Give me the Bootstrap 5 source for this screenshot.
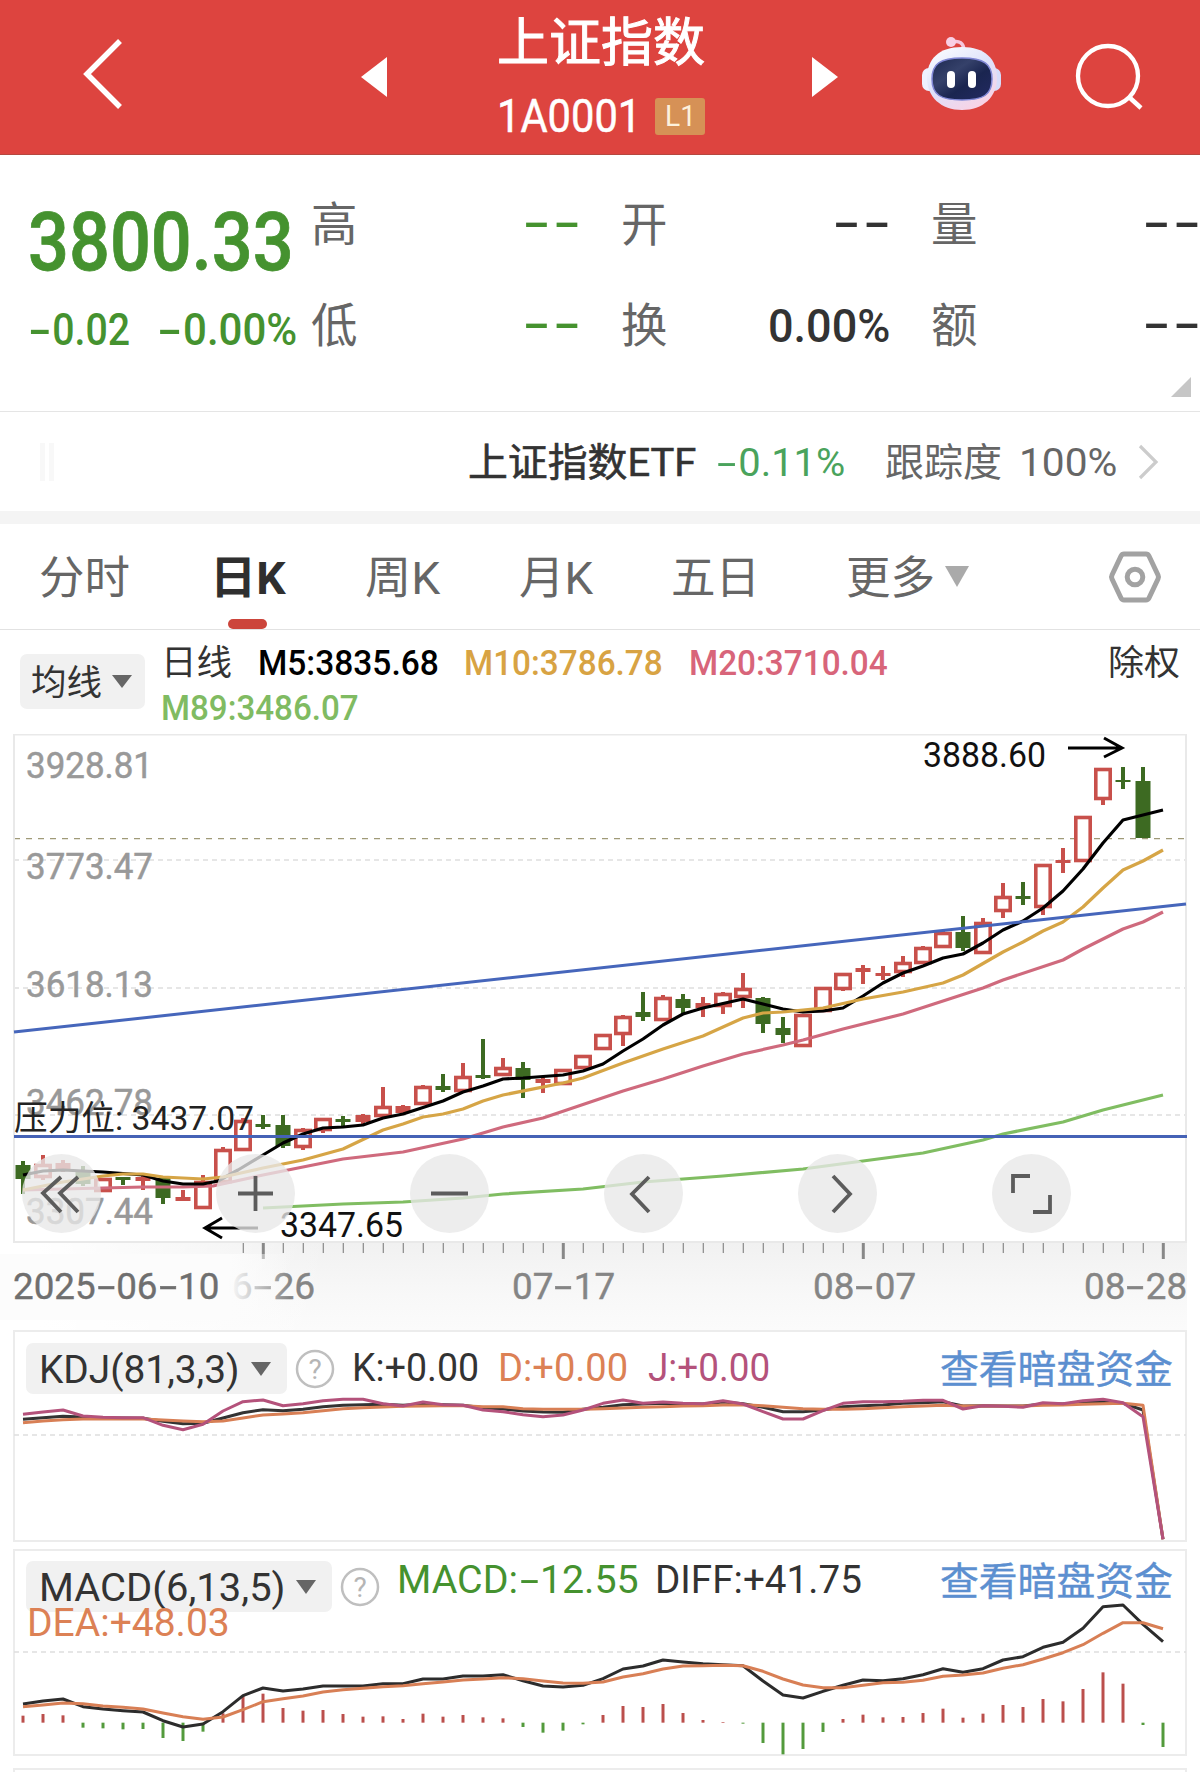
<!DOCTYPE html>
<html lang="zh-CN">
<head>
<meta charset="utf-8">
<meta name="viewport" content="width=device-width, initial-scale=1">
<title>上证指数</title>
<link href="https://cdn.jsdelivr.net/npm/bootstrap@5.3.0/dist/css/bootstrap.min.css" rel="stylesheet">
<style>
body{width:1200px;height:1772px;overflow:hidden;background:#fff;color:#333;font-family:Roboto,"Noto Sans CJK SC",sans-serif;line-height:1}
svg{display:block}
.xgrid{display:grid;align-items:center;white-space:nowrap}
.fit{display:inline-block;transform-origin:0 50%;white-space:nowrap}
.hy{display:inline-block;font-style:normal;transform:scaleX(1.75);margin:0 .14em}
.green{color:#45922f}.amber{color:#d8a343}.rose{color:#d8657a}.lime{color:#80bb62}.orange{color:#dc8155}.plum{color:#b4527b}.muted6{color:#666}
.m{font-weight:500}
.down{padding-top:4px}
.topbar{height:155px;background:#dd443f;color:#fff;border-bottom:1px solid #b5483f;grid-template-columns:83px 278px 132px 319px 109px 151px 1fr}
.backicon{margin-bottom:7px}
.botface{margin-bottom:9px}
.titlebox{height:154px;padding-top:18px;padding-left:4px}
.titletext{font-size:52px;height:52px;-webkit-text-stroke:1px #fff}
.code{font-size:46px;margin-top:23px;height:46px;-webkit-text-stroke:.5px #fff}
.lv{background:#d69156;color:#fdf1dc;width:50px;height:37px;font-size:30px;border-radius:3px;margin-left:14px;-webkit-text-stroke:0}
.quote{height:257px;border-bottom:1px solid #e5e5e5;padding-left:28px;position:relative}
.price{font-size:81px;height:81px;margin-top:47px;-webkit-text-stroke:.8px #45922f}
.chg{font-size:45px;margin-top:24px}
.cell{width:267px;height:101px;font-size:46.5px;color:#666}
.cell b{font-weight:500;color:#333}
.cell b .hy{transform:scaleX(1.75);margin:0 .16em}
.dd{margin-right:-4px}
.cell b.green{color:#45922f}
.cells{padding-top:18px;column-gap:43px;margin-left:17px;width:888px}
.fold{position:absolute;right:9px;bottom:14px}
.etf{height:99px;grid-template-columns:40px 428px 248px 169px 134px 119px 1fr;font-size:39px;padding-top:4px}
.etf svg,.tabs svg,.ghosts{margin-bottom:4px}
.etfname{color:#333;-webkit-text-stroke:.6px #333}
.ghost{width:5px;height:38px;background:#f8f8f8}
.band{height:13px;background:#f4f4f4}
.tabs{height:106px;border-bottom:1px solid #e2e2e2;grid-template-columns:39px 171px 155px 154px 152px 175px 99px 163px 1fr;font-size:45px;color:#666;padding-top:4px}
.tabs .on{color:#2f2f2f;font-weight:700;position:relative}
.tabs .on:after{content:"";position:absolute;left:18px;top:63px;width:39px;height:10px;border-radius:5px;background:#cc453b}
.ma{height:104px;padding-left:20px;font-size:35px}
.pill{background:#f1f1f1;border-radius:7px;color:#333}
.pill.a{width:125px;height:55px;padding:0 13px 0 11px;margin-top:24px}
.malines{margin-left:16px;width:1040px;padding-top:13px}
.maline1{grid-template-columns:97px 206px 225px 419px 1fr;height:40px}
.maline2{height:50px;padding-top:1px}
.plot{height:509px}
.tools .ball{position:absolute;top:420px;width:79px;height:79px;border-radius:50%;background:rgba(232,232,232,.78)}
.axis{height:87px;background:linear-gradient(#f1f1f1,#f8f8f8 60%,#fbfbfb);width:1187px;position:relative}
.axis:before{content:"";position:absolute;inset:0;background:linear-gradient(90deg,#fff 40px,rgba(255,255,255,0) 330px)}
.dates{position:relative;font-size:37.5px;color:#858585;-webkit-text-stroke:.4px currentColor;grid-template-columns:211px 301px 301px 271px 1fr;height:86px;margin-top:-86px}
.firstdate{position:absolute;left:0;top:10px;width:290px;height:66px;padding:14px 0 0 13px;background:linear-gradient(90deg,#fcfcfc 79%,rgba(250,250,250,0));color:#6f6f6f}
.panel{position:relative;width:1174px;margin-left:13px;border:2px solid #ececec}
.kdj{height:212px}.macd{height:207px;margin-top:7px}.nextp{height:8px;margin-top:12px;border-bottom:0}
.panel>svg{position:absolute;left:-15px;top:-2px}
.legend{position:relative;font-size:39px}
.kdj .legend{margin:11px 0 0 11px;grid-template-columns:269px 57px 146px 150px 292px 1fr;height:51px}
.macd .legend{margin:10px 0 0 11px;grid-template-columns:306px 65px 258px 285px 1fr;height:51px}
.macd .legend>.up{margin-top:-12px}
.dea{position:relative;font-size:39px;margin:-8px 0 0 12px}
.pill.k{width:261px;height:51px;padding:0 16px 0 13px}
.pill.d{width:306px;height:51px;padding:0 16px 0 13px}
.linkb{color:#5c8fd0;font-size:38.8px;text-decoration:none;-webkit-text-stroke:.4px #5c8fd0}
</style>
<script src="https://cdn.jsdelivr.net/npm/bootstrap@5.3.0/dist/js/bootstrap.bundle.min.js"></script>
</head>
<body>
<header class="topbar xgrid">
  <span></span>
  <svg class="backicon" width="40" height="74" viewBox="0 0 40 74"><path d="M37 4 4 37 37 70" fill="none" stroke="#fff" stroke-width="5.5"/></svg>
  <svg width="26" height="40" viewBox="0 0 26 40"><path d="M26 0V40L0 20z" fill="#fff"/></svg>
  <div class="titlebox">
    <div class="titletext"><span class="fit" data-w="208">上证指数</span></div>
    <div class="code d-flex align-items-center"><span class="fit" data-w="144">1A0001</span><span class="lv d-flex align-items-center justify-content-center"><span class="fit" data-w="31">L1</span></span></div>
  </div>
  <svg width="26" height="40" viewBox="0 0 26 40"><path d="M0 0V40L26 20z" fill="#fff"/></svg>
  <svg class="botface" width="82" height="78" viewBox="0 0 82 78">
    <defs>
      <linearGradient id="shell" x1="0" y1="0" x2=".6" y2="1"><stop offset="0" stop-color="#fff"/><stop offset=".55" stop-color="#dde2fb"/><stop offset="1" stop-color="#f7d3e6"/></linearGradient>
      <linearGradient id="visor" x1="0" y1="0" x2="1" y2="1"><stop offset="0" stop-color="#1e2951"/><stop offset=".35" stop-color="#35416a"/><stop offset=".6" stop-color="#1a2550"/><stop offset="1" stop-color="#232a62"/></linearGradient>
    </defs>
    <path d="M31 8c7-2 12 1 12 9" fill="none" stroke="#f6c6dc" stroke-width="3.5"/><circle cx="30" cy="8" r="5" fill="#f9cfe4"/>
    <rect x="1" y="34" width="14" height="23" rx="7" fill="#eef0ff"/><rect x="66" y="34" width="14" height="23" rx="7" fill="#d7dcfa"/>
    <path d="M41 13c23 0 35 12 35 31S62 76 41 76 6 63 6 44 18 13 41 13z" fill="url(#shell)"/>
    <path d="M41 24c22 0 30 6 30 21 0 16-9 21-30 21S11 61 11 45c0-15 8-21 30-21z" fill="url(#visor)" stroke="#8087d5" stroke-width="1.5"/>
    <rect x="26" y="37" width="8" height="17" rx="4" fill="#fff"/><rect x="47" y="37" width="8" height="17" rx="4" fill="#fff"/>
  </svg>
  <svg width="72" height="72" viewBox="0 0 72 72"><circle cx="36" cy="35" r="30" fill="none" stroke="#fff" stroke-width="4.3"/><path d="m57 56 12 11" stroke="#fff" stroke-width="4.5"/></svg>
</header>

<section class="quote d-flex">
  <div style="width:266px">
    <div class="price m green"><span class="fit" data-w="266">3800.33</span></div>
    <div class="chg m green d-flex"><span class="fit" data-w="102"><i class="hy">-</i>0.02</span><span class="fit" data-w="140" style="margin-left:27px"><i class="hy">-</i>0.00%</span></div>
  </div>
  <div class="cells d-flex flex-wrap align-content-start">
    <div class="cell d-flex align-items-center justify-content-between"><span class="down">高</span><b class="green dd"><span class="fit" data-w="60"><i class="hy">-</i><i class="hy">-</i></span></b></div>
    <div class="cell d-flex align-items-center justify-content-between"><span class="down">开</span><b class="dd"><span class="fit" data-w="60"><i class="hy">-</i><i class="hy">-</i></span></b></div>
    <div class="cell d-flex align-items-center justify-content-between"><span class="down">量</span><b class="dd"><span class="fit" data-w="60"><i class="hy">-</i><i class="hy">-</i></span></b></div>
    <div class="cell d-flex align-items-center justify-content-between"><span class="down">低</span><b class="green dd"><span class="fit" data-w="60"><i class="hy">-</i><i class="hy">-</i></span></b></div>
    <div class="cell d-flex align-items-center justify-content-between"><span class="down">换</span><b class="down" style="margin-right:-2px"><span class="fit" data-w="122">0.00%</span></b></div>
    <div class="cell d-flex align-items-center justify-content-between"><span class="down">额</span><b class="dd"><span class="fit" data-w="60"><i class="hy">-</i><i class="hy">-</i></span></b></div>
  </div>
  <svg class="fold" width="20" height="20"><path d="M20 0V20H0z" fill="#c6c6c6"/></svg>
</section>

<section class="etf xgrid">
  <span></span>
  <span class="ghosts d-flex gap-1"><i class="ghost"></i><i class="ghost"></i></span>
  <span class="fit etfname" data-w="228">上证指数ETF</span>
  <span class="fit" data-w="129" style="color:#4aa35c"><i class="hy">-</i>0.11%</span>
  <span class="fit muted6" data-w="117">跟踪度</span>
  <span class="fit muted6" data-w="98">100%</span>
  <svg width="22" height="36" viewBox="0 0 22 36"><path d="m2 2 16 16L2 34" fill="none" stroke="#ccc" stroke-width="3.2"/></svg>
</section>
<div class="band"></div>

<nav class="tabs xgrid">
  <span></span><span class="fit" data-w="91">分时</span><span class="on"><span class="fit" data-w="76">日K</span></span><span class="fit" data-w="75">周K</span><span class="fit" data-w="74">月K</span><span class="fit" data-w="89">五日</span><span class="fit" data-w="89">更多</span>
  <svg width="24" height="21"><path d="M0 0H24L12 21z" fill="#aaa"/></svg>
  <svg width="54" height="54" viewBox="0 0 54 54" fill="none" stroke="#a2a2a2"><path d="M16 4H38Q40 4 41 6L50 25Q51 27 50 29L41 48Q40 50 38 50H16Q14 50 13 48L4 29Q3 27 4 25L13 6Q14 4 16 4z" stroke-width="5"/><circle cx="27" cy="27" r="7.8" stroke-width="5"/></svg>
</nav>

<section class="ma d-flex align-items-start">
  <div class="pill a d-flex align-items-center justify-content-between"><span class="fit down" data-w="71">均线</span><svg width="20" height="13"><path d="M0 0H20L10 13z" fill="#666"/></svg></div>
  <div class="malines">
    <div class="maline1 xgrid"><span class="fit" data-w="71">日线</span><span class="fit m text-black" data-w="181">M5:3835.68</span><span class="fit m amber" data-w="199">M10:3786.78</span><span class="fit m rose" data-w="199">M20:3710.04</span><span class="fit" data-w="72">除权</span></div>
    <div class="maline2 d-flex align-items-center"><span class="fit m lime" data-w="198">M89:3486.07</span></div>
  </div>
</section>

<section class="plot position-relative">
  <svg id="kline" width="1200" height="509" viewBox="0 734 1200 509"></svg>
  <div class="tools" id="tools"></div>
</section>
<section>
  <div class="axis"></div>
  <div class="dates xgrid">
    <span></span><span class="fit" data-w="104">06<i class="hy">-</i>26</span><span class="fit" data-w="103">07<i class="hy">-</i>17</span><span class="fit" data-w="103">08<i class="hy">-</i>07</span><span class="fit" data-w="103">08<i class="hy">-</i>28</span>
    <div class="firstdate"><span class="fit" data-w="206">2025<i class="hy">-</i>06<i class="hy">-</i>10</span></div>
  </div>
</section>

<section class="panel kdj">
  <svg id="kdj" width="1200" height="212" viewBox="0 1330 1200 212"></svg>
  <div class="legend xgrid">
    <div class="pill k d-flex align-items-center justify-content-between"><span class="fit down" data-w="201">KDJ(81,3,3)</span><svg width="20" height="14"><path d="M0 0H20L10 14z" fill="#666"/></svg></div>
    <svg class="help" width="40" height="40" viewBox="0 0 40 40"><circle cx="20" cy="20" r="18" fill="none" stroke="#bfbfbf" stroke-width="2.5"/><text x="20" y="30" text-anchor="middle" font-size="28" fill="#b5b5b5">?</text></svg>
    <span class="fit" data-w="127">K:+0.00</span><span class="fit orange" data-w="130">D:+0.00</span><span class="fit plum" data-w="122">J:+0.00</span>
    <a class="linkb down">查看暗盘资金</a>
  </div>
</section>
<section class="panel macd">
  <svg id="macd" width="1200" height="207" viewBox="0 1549 1200 207"></svg>
  <div class="legend xgrid">
    <div class="pill d d-flex align-items-center justify-content-between"><span class="fit down" data-w="247">MACD(6,13,5)</span><svg width="20" height="14"><path d="M0 0H20L10 14z" fill="#666"/></svg></div>
    <svg class="help ms-2" width="40" height="40" viewBox="0 0 40 40"><circle cx="20" cy="20" r="18" fill="none" stroke="#bfbfbf" stroke-width="2.5"/><text x="20" y="30" text-anchor="middle" font-size="28" fill="#b5b5b5">?</text></svg>
    <span class="fit green up" data-w="242">MACD:<i class="hy">-</i>12.55</span><span class="fit up" data-w="207">DIFF:+41.75</span>
    <a class="linkb up down">查看暗盘资金</a>
  </div>
  <div class="dea"><span class="fit orange" data-w="203">DEA:+48.03</span></div>
</section>
<section class="panel nextp"></section>

<script>
// Condense or widen each label to its set width, keeping the flow width in step.
document.querySelectorAll('.fit').forEach(e=>{
  e.style.justifySelf='start';
  const n=e.offsetWidth,w=+e.dataset.w;
  e.style.width=n+'px';
  e.style.flex='none';
  e.style.transform='scaleX('+w/n+')';
  e.style.marginRight=(w-n)+'px';
});
const X=i=>23+20*i, RED='#c8504b', GRN='#3d6a22';
const line=(p,c,w)=>`<polyline points="${p}" fill="none" stroke="${c}" stroke-width="${w||3.2}" stroke-linejoin="round"/>`;
const grid=(y,c,d)=>`<path d="M14 ${y}H1186" stroke="${c||'#dedede'}" stroke-width="1.3" stroke-dasharray="${d||'5 4'}"/>`;
const txt=(s,x,y,w,c,f)=>`<text x="${x}" y="${y}" font-size="${f||36}" fill="${c}" textLength="${w}" lengthAdjust="spacingAndGlyphs">${s}</text>`;
// kind (r hollow red, f solid red, g green), body top, body bottom, high, low
const candles=[['g',1165,1179,1161,1194],['r',1164,1178,1155,1180],['f',1163,1169,1160,1172],['g',1170,1184,1166,1186],['r',1178,1192,1178,1192],['g',1177,1180,1177,1185],['f',1177,1181,1176,1190],['g',1178,1198,1178,1204],['f',1197,1201,1190,1201],['r',1181,1209,1175,1209],['r',1149,1183,1147,1183],['r',1120,1151,1118,1151],['g',1124,1127,1115,1129],['g',1125,1146,1115,1148],['r',1129,1148,1128,1150],['r',1118,1131,1118,1133],['g',1119,1122,1116,1126],['f',1115,1122,1114,1125],['r',1106,1117,1087,1117],['f',1106,1113,1105,1113],['r',1086,1105,1085,1105],['g',1086,1090,1074,1092],['r',1076,1092,1063,1092],['g',1075,1078,1039,1079],['r',1067,1076,1058,1076],['g',1068,1080,1062,1098],['f',1079,1083,1077,1093],['r',1069,1085,1069,1085],['r',1055,1069,1055,1069],['r',1034,1050,1034,1050],['r',1016,1035,1015,1046],['g',1012,1017,992,1021],['r',997,1021,995,1021],['g',999,1008,994,1014],['f',1003,1008,997,1017],['r',993,1007,992,1014],['r',988,998,973,1008],['g',998,1024,997,1033],['g',1028,1035,1017,1043],['r',1014,1047,1014,1047],['r',987,1012,987,1012],['r',973,990,973,991],['f',968,972,965,984],['f',973,976,966,980],['r',962,973,956,977],['r',947,964,946,964],['r',932,948,931,948],['g',932,948,916,951],['r',922,954,918,954],['r',896,912,883,918],['g',896,899,882,905],['r',864,908,864,915],['f',860,863,848,873],['r',816,862,816,862],['r',768,800,768,805],['g',780,782,767,789],['g',781,838,767,838]];
let s=grid(860)+grid(988)+grid(1115)+grid(838.7,'#a09a78','6 6');
s+='<path d="M14 734V1243M1186 734V1243M13 734.5H1187M13 1242H1187" stroke="#e9e9e9" stroke-width="2"/>';
[['3928.81',778],['3773.47',879],['3618.13',997],['3462.78',1115],['3307.44',1224]].forEach(a=>s+=`<g stroke="#999" stroke-width=".5">${txt(a[0],26,a[1],127,'#999',37)}</g>`);
s+=txt('3347.65',280,1237,123,'#111',35)+txt('3888.60',923,767,123,'#111',35);
s+='<path d="M258 1228H205M222 1218 205 1228 222 1238M1068 748H1121M1104 738 1122 748 1104 757" fill="none" stroke="#000" stroke-width="3"/>';
candles.forEach(([k,a,b,h,l],i)=>{
  const x=X(i),c=k=='g'?GRN:RED;
  if(k=='r') s+=`<path d="M${x} ${h}V${a}M${x} ${b}V${l}" stroke="${c}" stroke-width="4"/><rect x="${x-7.2}" y="${a+1.5}" width="14.4" height="${b-a-3}" fill="#fff" stroke="${c}" stroke-width="3.6"/>`;
  else s+=`<path d="M${x} ${h}V${l}" stroke="${c}" stroke-width="4"/><rect x="${x-7.5}" y="${a}" width="15" height="${b-a}" fill="${c}"/>`;
});
s+=line('263,1208 303,1206 343,1204 403,1202 463,1198 503,1194 583,1189 643,1182 723,1176 803,1169 863,1161 923,1153 983,1140 1003,1134 1063,1122 1103,1110 1163,1095','#80bd62');
s+=line('23,1190 103,1188 143,1187 183,1187 213,1186 263,1175 303,1167 343,1159 403,1152 463,1139 503,1127 543,1118 623,1091 663,1079 703,1066 743,1054 783,1045 803,1040 843,1029 903,1014 943,1001 983,988 1003,980 1063,960 1083,949 1123,929 1143,922 1163,912','#cf6a7d');
s+=line('23,1175 43,1171 63,1170 83,1171 103,1172 143,1175 163,1181 183,1184 203,1184 218,1181 238,1170 263,1155 283,1143 303,1134 323,1128 343,1127 363,1125 383,1118 403,1114 443,1101 463,1092 483,1086 503,1079 523,1078 563,1075 583,1071 603,1064 623,1051 643,1039 663,1025 683,1014 703,1008 743,999 763,1004 783,1009 803,1012 823,1011 843,1008 863,996 883,983 903,973 923,966 943,958 963,954 983,943 1003,930 1023,921 1043,908 1063,891 1083,869 1103,843 1123,820 1163,810','#000');
s+=line('23,1190 63,1182 103,1176 123,1174 143,1174 163,1177 203,1179 223,1177 263,1168 303,1160 343,1149 383,1130 403,1124 423,1117 443,1114 463,1109 483,1101 503,1095 563,1083 583,1078 623,1063 663,1049 703,1036 743,1018 763,1013 783,1012 823,1008 863,999 903,992 943,983 963,975 1003,952 1023,942 1043,931 1063,922 1083,907 1103,888 1123,870 1143,861 1163,850','#d6a546');
s+=line('14,1032 1186,904','#4666bb',3)+line('14,1136.5 1187,1136.5','#4562b6',3.2);
s+=txt('压力位: 3437.07',14,1130,240,'#222',34);
kline.innerHTML=s;

const icons=['M56 23 38 39 56 58M39 23 21 39 39 58','M22 39.5H57M39.5 22V57','M21 39.5H58','M45 23 28 40 45 58','M35 22 52 40 35 58','M38 22H21V39M41 58H58V41'];
tools.innerHTML=icons.map((d,i)=>`<button class="ball border-0 p-0" style="left:${21.5+194*i}px"><svg width="79" height="79" fill="none" stroke="#5c5c5c" stroke-width="3.8"><path d="${d}"/></svg></button>`).join('');

let t='';
for(let i=11;i<=57;i++){const big=(i-12)%15==0;t+=`<path d="M${X(i)+.3} 0V${big?16:10}" stroke="#888" stroke-width="${big?3:1.2}"/>`}
document.querySelector('.axis').innerHTML=`<svg width="1187" height="20" class="position-relative">${t}</svg>`;

const ser=(a,c)=>line(a.map((z,i)=>X(i)+','+(1320+z/3).toFixed(1)).join(' '),c,3);
kdj.innerHTML=grid(1435)+
 ser([298,293,289,291,294,294,295,304,311,310,294,278,269,272,268,260,256,254,253,256,253,254,256,263,267,273,276,277,268,262,254,252,250,252,252,246,251,262,275,275,270,260,257,255,250,248,245,258,257,258,258,252,252,247,245,250,270,658],'#333')+
 ser([308,303,299,297,297,297,297,300,303,305,303,294,285,282,278,272,266,263,261,259,258,257,257,260,260,266,268,268,268,266,264,262,260,258,257,255,254,257,262,266,268,268,266,263,260,258,256,258,258,258,258,256,255,253,251,250,256,658],'#d87f55')+
 ser([283,276,270,288,292,293,293,316,329,313,273,245,240,257,251,242,238,238,251,258,246,254,256,270,275,284,290,285,270,250,240,250,246,250,251,242,252,275,297,297,272,250,245,245,244,241,241,267,257,259,262,248,251,242,238,248,290,658],'#b4527b');
const bars=[1187,1182,1186,1223,1225,1228,1227,1254,1263,1235,1180,1127,1121,1164,1172,1170,1182,1190,1189,1197,1181,1190,1185,1192,1195,1221,1238,1232,1213,1185,1158,1161,1152,1179,1200,1206,1211,1269,1303,1287,1236,1197,1184,1192,1191,1179,1166,1193,1181,1155,1161,1137,1144,1107,1057,1091,1215,1281];
macd.innerHTML=grid(1652)+bars.map((z,i)=>`<path d="M${X(i)} ${1320+1208/3}V${1320+z/3}" stroke="${z>1208?'#539a3c':'#bb4f4c'}" stroke-width="3"/>`).join('')+
 ser([1152,1143,1137,1160,1167,1172,1176,1202,1221,1212,1175,1127,1104,1113,1107,1098,1098,1098,1091,1091,1077,1077,1068,1068,1064,1082,1098,1101,1096,1076,1047,1038,1020,1026,1031,1034,1037,1083,1125,1134,1114,1096,1080,1082,1076,1064,1046,1057,1046,1020,1010,982,967,925,860,855,913,965],'#2c2c2c')+
 ser([1160,1155,1149,1151,1158,1162,1167,1179,1190,1198,1191,1169,1145,1136,1128,1116,1109,1105,1100,1097,1091,1086,1080,1077,1073,1076,1083,1089,1090,1086,1071,1061,1047,1038,1037,1036,1037,1054,1077,1095,1103,1103,1096,1088,1087,1081,1069,1065,1059,1045,1034,1017,998,974,940,908,908,926],'#d87f55');
</script>
</body>
</html>
